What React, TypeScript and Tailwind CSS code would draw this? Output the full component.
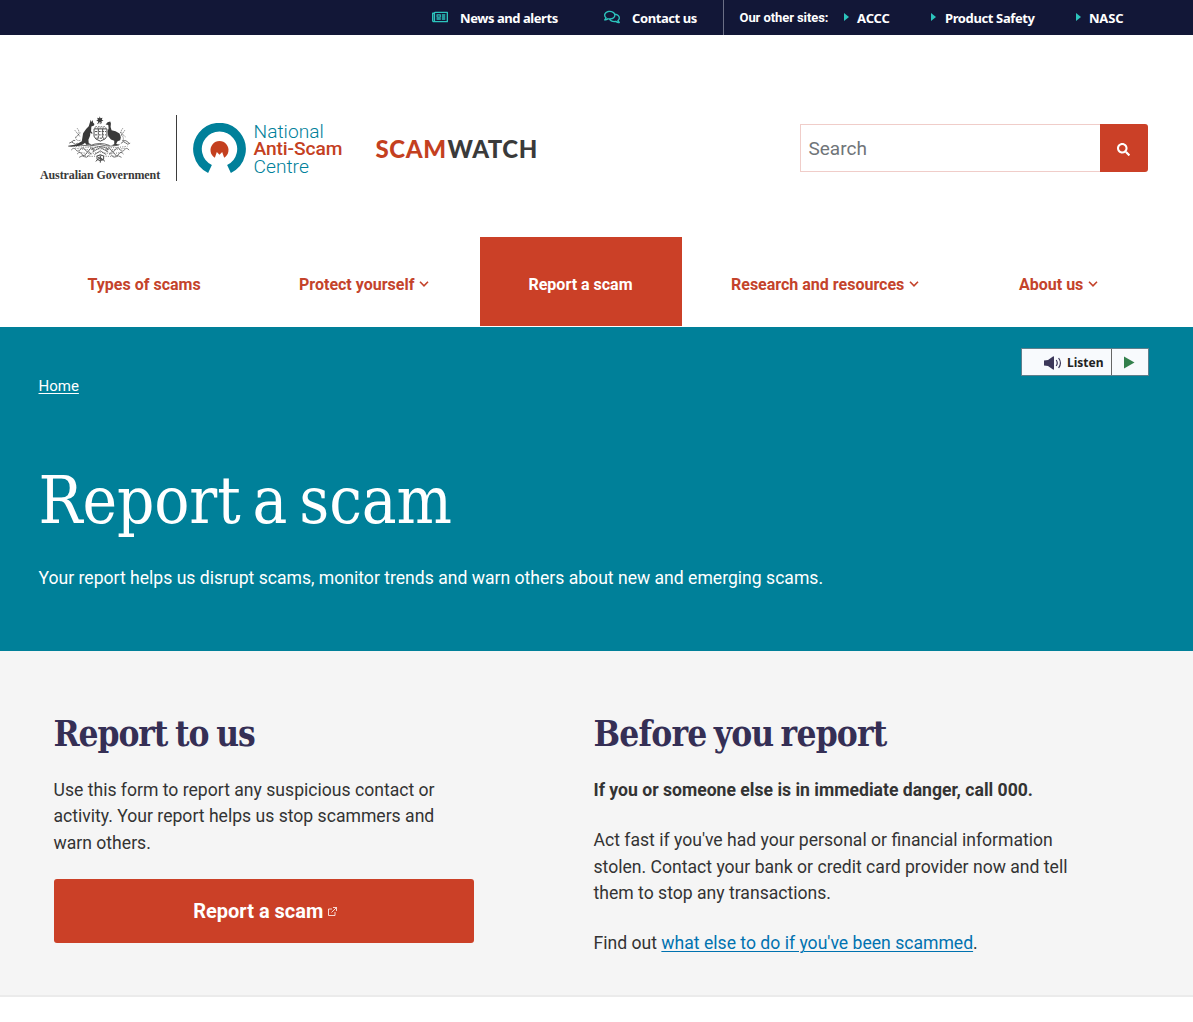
import React from "react";
import { FaRegNewspaper, FaRegComments, FaSearch } from "react-icons/fa";

function Crest() {
  return (
    <svg viewBox="110 30 195 148" className="block h-[49px] w-[65px]" fill="#3a3a3a" stroke="none">
      <path d="M208 34l2.500 6 6-2-2 6 5 3-6 2 1 6-6-3-6 3 1-6-6-2 5-3-2-6 6 2z" />
      <path d="M181 44l2 7 4-6 1 8 4 4-1 5-8 3-1 14 5 6-3 2-4-4-1 10-5 12 1 10 7 3-1 2-14 0-3-6-6 4-10 5-25 3-10-1 0-2 24-4 17-10 4-24 9-13 8-8z" />
      <path d="M232 52l8-2 2 6-1 10 3 10 12 3 12 7 4 12-2 8-8 3-4 8 9 4-20 2 0-3 5-2 0-10-10-4-8-10-2-14 3-10-1-10-8-1z" />
      <g fill="none" stroke="#4a4a4a">
        <path strokeWidth="3" d="M191 72h39v22q-1 9-20 15q-18-6-19-15z" />
        <path strokeWidth="3" strokeDasharray="7 3" d="M194 80h33M194 90h33M198 100h24M204 72v30M217 72v30" />
        <path strokeWidth="2" strokeDasharray="5 3" d="M200 56h16M195 65h30M192 69h36" />
        <path strokeWidth="2.4" d="M116 115q8-7 13 0t13 0M124 112q3-8 10-5M272 116q8-10 14-2t14 1M276 108q12-4 20 6M180 122q28-12 58 0M150 121q30 6 58-2q34 10 60 0" />
        <path strokeWidth="2.2" d="M122 136q8-10 14-1t14-1 14 1 14-1 12 6M297 136q-8-10-14-1t-14-1-14 1-14-1-12 6M140 148q8-10 14 0t14-2 14 4M280 148q-8-10-14 0t-14-2-14 4M146 158q10-8 16-2t16-6M274 158q-10-8-16-2t-16-6M184 134q26-18 50 0M186 142l24-14 24 14M192 150l18-12 18 12" />
        <path strokeWidth="2.5" strokeDasharray="3 4" d="M130 124q40 6 78 2q40 6 84-2M134 130q40 8 76 2 40 6 76-2M146 142q30 8 64 0 34 8 66 0M156 152q30 6 54 0 30 6 52 0" />
        <path strokeWidth="2" strokeDasharray="4 2" d="M140 70q10 12 2 22q-8 6-6 10q6 8 14 4M133 76l16 20M150 84l-16 14M278 70q-10 12-2 22 6 8 2 16M284 76l-14 20M270 82l16 14" />
        <path strokeWidth="3" d="M200 154q10-8 20 0v10q-10 8-20 0zM196 170l14-12 14 12M203 158l14 8M210 152v22" />
      </g>
    </svg>
  );
}

function CentreMark() {
  return (
    <svg viewBox="38 52 158 156" className="mr-[7.500px] block h-[52px] w-[53px] shrink-0">
      <path d="M88.500 190A66 66 0 1 1 145.500 190" fill="none" stroke="#00809a" strokeWidth="26" />
      <path d="M103 156A27 27 0 1 1 131 156L125 139L117 147L109 139Z" fill="#c4401f" />
    </svg>
  );
}

function Chevron() {
  return (
    <svg viewBox="0 0 10 8" className="mb-px ml-[5px] h-2 w-[10px]" fill="none" stroke="currentColor" strokeWidth="1.6">
      <path d="M1 1.800L5 5.800L9 1.800" />
    </svg>
  );
}

function Caret() {
  return (
    <svg viewBox="0 0 5 8" className="mb-px h-2 w-[5px]" fill="#2cc4bd">
      <path d="M0 0L5 4L0 8Z" />
    </svg>
  );
}

function TopBar() {
  return (
    <div className="flex h-[35px] items-center bg-[#121737] pl-[432px] font-['Noto_Sans'] text-[13px] font-bold whitespace-nowrap text-white">
      <FaRegNewspaper className="mb-px h-4 w-4 text-[#2cc4bd]" />
      <a className="ml-3 w-[144px] pt-[2px] tracking-[-0.44px]">News and alerts</a>
      <FaRegComments className="mb-px h-4 w-4 text-[#2cc4bd]" />
      <a className="ml-3 w-[91px] pt-[2px] tracking-[-0.42px]">Contact us</a>
      <div className="flex h-full items-center border-l border-[#6b6f85] pl-[15.500px]">
        <span className="w-[104.500px] font-[Roboto] tracking-[-0.08px]">Our other sites:</span>
        <Caret />
        <a className="ml-2 w-[74px] pt-[2px] tracking-[-0.1px]">ACCC</a>
        <Caret />
        <a className="ml-[9px] w-[131px] pt-[2px] tracking-[-0.38px]">Product Safety</a>
        <Caret />
        <a className="ml-2 pt-[2px] tracking-[-0.2px]">NASC</a>
      </div>
    </div>
  );
}

function Header() {
  return (
    <header className="flex h-[202px] items-start pt-20 pr-[45px] pl-10">
      <div className="flex h-[66px] w-[137px] flex-col border-r border-[#3d3d3d]">
        <div className="pl-[27px]"><Crest /></div>
        <div className="mt-1 font-['Liberation_Serif'] text-[12px] leading-[14px] font-bold tracking-[-0.11px] whitespace-nowrap text-[#3a3a3a]">
          Australian Government
        </div>
      </div>
      <div className="mt-2 ml-4 flex">
        <CentreMark />
        <div className="mt-[-0.500px] w-[122px] text-[19.200px] leading-[17.500px] font-light text-[#00809a]">
          <div>National</div>
          <div className="font-medium tracking-[-0.1px] text-[#c4401f]">Anti-Scam</div>
          <div>Centre</div>
        </div>
      </div>
      <div className="mt-[20px] flex font-[Lato] text-[24px] leading-7 font-black text-[#3a3a3a]">
        <span className="w-[72px] tracking-[0.6px] text-[#c4401f]">SCAM</span>
        <span className="tracking-[0.5px]">WATCH</span>
      </div>
      <form className="mt-[9px] ml-auto flex h-12 w-[348px]">
        <div className="flex flex-1 items-center border border-r-0 border-[#f0cdc9] pt-[2px] pl-[7.500px] text-[19px] text-[#707579]">Search</div>
        <button className="flex w-12 items-center justify-center rounded-r-[3px] bg-[#cb4027] pt-[3px] pr-[2px] text-white">
          <FaSearch className="h-[13px] w-[13px]" />
        </button>
      </form>
    </header>
  );
}

function Nav() {
  return (
    <nav className="flex h-[90px] text-[16px] font-bold whitespace-nowrap text-[#c4432b]">
      <a className="flex h-[89px] w-[249px] items-center pt-[6px] pl-[87.500px]">Types of scams</a>
      <a className="flex h-[89px] w-[231px] items-center pt-[6px] pl-[50px]">Protect yourself<Chevron /></a>
      <a className="flex h-[89px] w-[202px] items-center justify-center bg-[#cb4027] pt-[6px] pr-px text-white">Report a scam</a>
      <a className="flex h-[89px] w-[288px] items-center pt-[6px] pl-[49px]">Research and resources<Chevron /></a>
      <a className="flex h-[89px] items-center pt-[6px] pl-[49px]">About us<Chevron /></a>
    </nav>
  );
}

function ListenButton() {
  return (
    <div className="flex h-[28px] w-[128px] border border-[#5f7f8c] bg-[#f8fafd]">
      <div className="flex w-[90px] items-center border-r border-[#666] pt-[2px] pl-[22px] font-['Noto_Sans'] text-[12px] font-bold text-[#222]">
        <svg viewBox="0 0 18 14" className="mr-[5px] h-[14px] w-[18px]" fill="#3b3759">
          <path d="M0 4.500L4 4L9 .5Q10 0 10 1V13Q10 14 9 13.500L4 10L0 9.500Z" />
          <path d="M12.200 4Q14.300 7 12.200 10M14.600 2Q18.300 7 14.600 12" fill="none" stroke="#3b3759" strokeWidth="1.200" />
        </svg>
        Listen
      </div>
      <div className="flex flex-1 items-center justify-center pt-px pr-[2px]">
        <svg viewBox="0 0 11 13" className="h-[13px] w-[11px]"><path d="M0 .5L10.500 6.500L0 12.500Z" fill="#33804c" /></svg>
      </div>
    </div>
  );
}

function Hero() {
  return (
    <section className="h-[324px] bg-[#008099] pr-11 pl-[38.500px] text-white">
      <div className="flex items-start justify-between pt-[21px]">
        <a className="mt-[28px] text-[15px] leading-5 underline decoration-1 underline-offset-2">Home</a>
        <ListenButton />
      </div>
      <h1 className="mt-[63px] font-['DejaVu_Serif_Condensed'] text-[65px] leading-[84px] tracking-[-0.1px] whitespace-nowrap [word-spacing:-6.5px]">
        Report a scam
      </h1>
      <p className="mt-[22px] text-[17.600px] leading-[26.400px] tracking-[-0.005px]">
        Your report helps us disrupt scams, monitor trends and warn others about new and emerging scams.
      </p>
    </section>
  );
}

function Content() {
  return (
    <section className="flex h-[346px] border-b-2 border-[#ebebeb] bg-[#f5f5f5] pt-[62px] pl-[53.500px] text-[17.600px] leading-[26.400px] text-[#333]">
      <div className="w-[540px]">
        <h2 className="font-['DejaVu_Serif_Condensed'] text-[35px] leading-[42px] font-bold tracking-[-1.1px] text-[#352f55] [word-spacing:-2px]">Report to us</h2>
        <p className="mt-[21.750px] w-[400px]">Use this form to report any suspicious contact or activity. Your report helps us stop scammers and warn others.</p>
        <a className="mt-[23.250px] flex h-16 w-[420px] items-center justify-center rounded-[3px] bg-[#cb4027] pl-[3.500px] text-[20px] font-bold text-white">
          Report a scam
          <svg viewBox="0 0 9 9" className="ml-[5px] h-[9px] w-[9px]" fill="none" stroke="currentColor" strokeWidth="0.800">
            <path d="M4 2H.5V8.500H7V5M5 .5H8.500V4M8.500 .5L3.500 5.500" />
          </svg>
        </a>
      </div>
      <div className="w-[500px]">
        <h2 className="font-['DejaVu_Serif_Condensed'] text-[35px] leading-[42px] font-bold tracking-[-0.8px] text-[#352f55] [word-spacing:-3px]">Before you report</h2>
        <p className="mt-[21.750px] font-bold">If you or someone else is in immediate danger, call 000.</p>
        <p className="mt-6">Act fast if you've had your personal or financial information stolen. Contact your bank or credit card provider now and tell them to stop any transactions.</p>
        <p className="mt-6">Find out <a className="text-[#0072b0] underline decoration-1 underline-offset-2">what else to do if you've been scammed</a>.</p>
      </div>
    </section>
  );
}

export default function App() {
  return (
    <div className="min-h-[1022px] w-full overflow-hidden bg-white font-[Roboto]">
      <TopBar />
      <Header />
      <Nav />
      <Hero />
      <Content />
    </div>
  );
}
